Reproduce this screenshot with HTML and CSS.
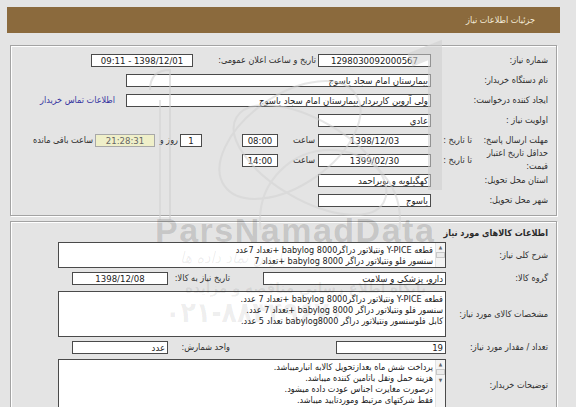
FILE: index.html
```html
<!DOCTYPE html>
<html lang="fa" dir="rtl">
<head>
    <meta charset="UTF-8">
    <title>جزئیات اطلاعات نیاز</title>
    <link rel="stylesheet" href="styles.css">
</head>
<body>

<div class="page">
    <div class="titlebar">جزئیات اطلاعات نیاز</div>

    <div class="panel info">
        <div class="row">
            <div class="lbl">شماره نیاز:</div>
            <div class="box w113 center">1298030092000567</div>
            <div class="lbl-mid">تاریخ و ساعت اعلان عمومی:</div>
            <div class="box w101 center">1398/12/01 - 09:11</div>
        </div>
        <div class="row">
            <div class="lbl">نام دستگاه خریدار:</div>
            <div class="box w305">بیمارستان امام سجاد یاسوج</div>
        </div>
        <div class="row">
            <div class="lbl">ایجاد کننده درخواست:</div>
            <div class="box w305">ولی آروین کاربردار بیمارستان امام سجاد یاسوج</div>
            <a class="contact" href="#">اطلاعات تماس خریدار</a>
        </div>
        <div class="row">
            <div class="lbl">اولویت نیاز :</div>
            <div class="box w113">عادی</div>
        </div>
        <div class="row">
            <div class="lbl split"><span class="main nowrap">مهلت ارسال پاسخ:</span><span class="sub">تا تاریخ :</span></div>
            <div class="box w113 center">1398/12/03</div>
            <div class="hour">ساعت</div>
            <div class="box w35 center">08:00</div>
            <div class="box w21 center day">1</div>
            <div class="day-lbl">روز و</div>
            <div class="box remain center">21:28:31</div>
            <div class="remain-lbl">ساعت باقی مانده</div>
        </div>
        <div class="row">
            <div class="lbl split"><span class="main">حداقل تاریخ اعتبار<br>قیمت:</span><span class="sub">تا تاریخ :</span></div>
            <div class="box w113 center">1399/02/30</div>
            <div class="hour">ساعت</div>
            <div class="box w35 center">14:00</div>
        </div>
        <div class="row">
            <div class="lbl">استان محل تحویل:</div>
            <div class="box w113">کهگیلویه و بویراحمد</div>
        </div>
        <div class="row">
            <div class="lbl">شهر محل تحویل:</div>
            <div class="box w113">یاسوج</div>
        </div>
    </div>

    <div class="panel goods">
        <div class="section-title">اطلاعات کالاهای مورد نیاز</div>

        <div class="field first">
            <div class="lbl">شرح کلی نیاز:</div>
            <div class="area short">
                <div class="scroll"><span class="up">▲</span><span class="thumb"></span></div>
                <div class="text">
                    قطعه Y-PICE ونتیلاتور دراگرbabylog 8000 +تعداد 7عدد<br>
                    سنسور فلو ونتیلاتور دراگر babylog 8000 +تعداد 7
                </div>
            </div>
        </div>

        <div class="row">
            <div class="lbl">گروه کالا:</div>
            <div class="box w183">دارو، پزشکی و سلامت</div>
            <div class="pair">
                <div class="pair-lbl">تاریخ نیاز به کالا:</div>
                <div class="box w96 center">1398/12/08</div>
            </div>
        </div>

        <div class="field">
            <div class="lbl">مشخصات کالای مورد نیاز:</div>
            <div class="area specs">
                <div class="text">
                    قطعه Y-PICE ونتیلاتور دراگرbabylog 8000 +تعداد 7 عدد.<br>
                    سنسور فلو ونتیلاتور دراگر babylog 8000 +تعداد 7 عدد.<br>
                    کابل فلوسنسور ونتیلاتور دراگر babylog8000 تعداد 5 عدد.
                </div>
            </div>
        </div>

        <div class="row">
            <div class="lbl">تعداد / مقدار مورد نیاز:</div>
            <div class="box w110">19</div>
            <div class="pair">
                <div class="pair-lbl">واحد شمارش:</div>
                <div class="box w96">عدد</div>
            </div>
        </div>

        <div class="field notes-field">
            <div class="lbl">توضیحات خریدار:</div>
            <div class="area notes">
                <div class="scroll"><span class="up">▲</span><span class="thumb"></span><span class="down">▼</span></div>
                <div class="text">
                    پرداخت شش ماه بعدازتحویل کالابه انبارمیباشد.<br>
                    هزینه حمل ونقل باتامین کننده میباشد.<br>
                    درصورت مغایرت اجناس عودت داده میشود.<br>
                    فقط شرکتهای مرتبط وموردتایید میباشد.
                </div>
            </div>
        </div>
    </div>

    <!-- watermark of the source site, lies over the form -->
    <svg class="wm-logo" width="340" height="200" viewBox="0 0 340 200">
        <path d="M10 60 Q10 40 30 40 L30 190" fill="none" stroke="#cfcfcf" stroke-width="2"/>
        <path d="M20 70 L20 190" fill="none" stroke="#d3d3d3" stroke-width="2"/>
        <ellipse cx="150" cy="110" rx="80" ry="45" fill="none" stroke="#d2d2d2" stroke-width="2" transform="rotate(-35 150 110)"/>
        <ellipse cx="170" cy="130" rx="85" ry="40" fill="none" stroke="#d2d2d2" stroke-width="2" transform="rotate(30 170 130)"/>
        <circle cx="190" cy="190" r="70" fill="none" stroke="#d4d4d4" stroke-width="2"/>
        <path d="M270 30 L295 20 L295 160" fill="none" stroke="#d0d0d0" stroke-width="14"/>
    </svg>
    <div class="wm-brand">ParsNamadData</div>
    <div class="wm-sub">پارس نماد داده ها</div>
    <div class="wm-line">پایگاه اطلاع رسانی مناقصه و مزایده</div>
    <div class="wm-phone">۰۲۱-۸۸۳۴۹۶۷۰</div>
</div>

</body>
</html>
```

FILE: styles.css
```css
body {
    margin: 0;
    background-color: #e4e4e4;
    font-family: "DejaVu Sans Condensed", "DejaVu Sans", sans-serif;
    font-size: 9px;
    color: #2e2e2e;
}

.page {
    position: relative;
    width: 576px;
    height: 407px;
    overflow: hidden;
    padding-top: 7px;
    box-sizing: border-box;
}

.titlebar {
    margin: 0 16px 0 7px;
    height: 26px;
    line-height: 26px;
    padding-right: 25px;
    background-color: #8b6a3d;
    color: #f3ead8;
    font-size: 9px;
}

.panel {
    margin: 12px 19px 0 10px;
    border: 1px solid #a3a3a3;
    box-shadow: 1px 1px 0 #fff, inset 1px 1px 0 #fff;
    padding: 4px 8px 5px 0;
}

.goods {
    margin-top: 5px;
    padding-bottom: 40px;
}

.row {
    display: flex;
    align-items: center;
    height: 20px;
}

.lbl {
    flex: none;
    width: 117px;
    white-space: nowrap;
}

.goods .lbl {
    width: 102px;
}

.split {
    display: flex;
    align-items: center;
    white-space: normal;
}

.split .main {
    width: 72px;
    line-height: 13px;
    white-space: nowrap;
}

.split .sub {
    width: 41px;
    padding-right: 4px;
}

.box {
    flex: none;
    box-sizing: border-box;
    height: 13px;
    line-height: 11px;
    padding: 0 2px;
    background-color: #fff;
    border: 1px solid #4a4a4a;
    color: #222;
    font-size: 9.5px;
    white-space: nowrap;
    overflow: hidden;
}

.center {
    text-align: center;
}

.w21 { width: 22px; }
.w35 { width: 36px; }
.w96 { width: 96px; }
.w101 { width: 102px; }
.w110 { width: 110px; }
.w113 { width: 113px; }
.w183 { width: 183px; }
.w305 { width: 305px; }

.lbl-mid {
    flex: none;
    width: 119px;
    margin: 0 2px 0 4px;
    white-space: nowrap;
}

.contact {
    margin-right: 11px;
    color: #3535a0;
    text-decoration: none;
    white-space: nowrap;
}

.hour {
    width: 27px;
    margin: 0 3px 0 10px;
}

.day {
    margin-right: 40px;
}

.day-lbl {
    width: 23px;
    margin-right: 2px;
    white-space: nowrap;
}

.remain {
    width: 60px;
    background-color: #efefc9;
    border-color: #a8a8a8;
    color: #666;
}

.remain-lbl {
    margin-right: 2px;
    white-space: nowrap;
}

.section-title {
    height: 15px;
    line-height: 15px;
    font-weight: bold;
    color: #2a2a2a;
}

.field {
    display: flex;
    align-items: center;
    margin-top: 3px;
}

.field.first {
    margin-top: 1px;
}

.notes-field {
    align-items: flex-start;
    margin-top: 2px;
}

.notes-field .lbl {
    padding-top: 21px;
}

.area {
    display: flex;
    width: 388px;
    box-sizing: border-box;
    background-color: #fff;
    border: 1px solid #4a4a4a;
    overflow: hidden;
}

.area .text {
    flex: 1;
    padding: 2px 2px 0 0;
    line-height: 11px;
    color: #222;
    white-space: nowrap;
}

.short {
    height: 26px;
}

.specs {
    height: 46px;
}

.notes {
    height: 62px;
}

.scroll {
    flex: none;
    width: 9px;
    display: flex;
    flex-direction: column;
    align-items: center;
    background-color: #f4f4f4;
    border-left: 1px solid #e2e2e2;
    color: #666;
    font-size: 5px;
    line-height: 8px;
}

.scroll .thumb {
    width: 9px;
    height: 6px;
    margin: 1px 0;
    box-sizing: border-box;
    border: 1px solid #c8c8c8;
    background-color: #ececec;
}

.pair {
    display: flex;
    align-items: center;
    margin-right: auto;
    margin-left: 61px;
}

.pair-lbl {
    width: 62px;
    padding-right: 2px;
    white-space: nowrap;
}

.wm-logo {
    position: absolute;
    left: 140px;
    top: 30px;
    pointer-events: none;
    opacity: 0.55;
}

.wm-brand {
    position: absolute;
    left: 155px;
    top: 211px;
    font-family: "Liberation Sans", Arial, sans-serif;
    font-size: 34px;
    font-weight: bold;
    letter-spacing: 1.5px;
    color: rgba(0, 0, 0, 0.14);
    direction: ltr;
}

.wm-sub {
    position: absolute;
    left: 180px;
    top: 248px;
    font-size: 16px;
    font-style: italic;
    color: rgba(0, 0, 0, 0.07);
}

.wm-line {
    position: absolute;
    left: 185px;
    top: 279px;
    font-size: 15px;
    font-weight: bold;
    color: rgba(0, 0, 0, 0.07);
}

.wm-phone {
    position: absolute;
    left: 165px;
    top: 296px;
    font-size: 28px;
    font-weight: bold;
    color: rgba(0, 0, 0, 0.07);
    direction: ltr;
}
```
